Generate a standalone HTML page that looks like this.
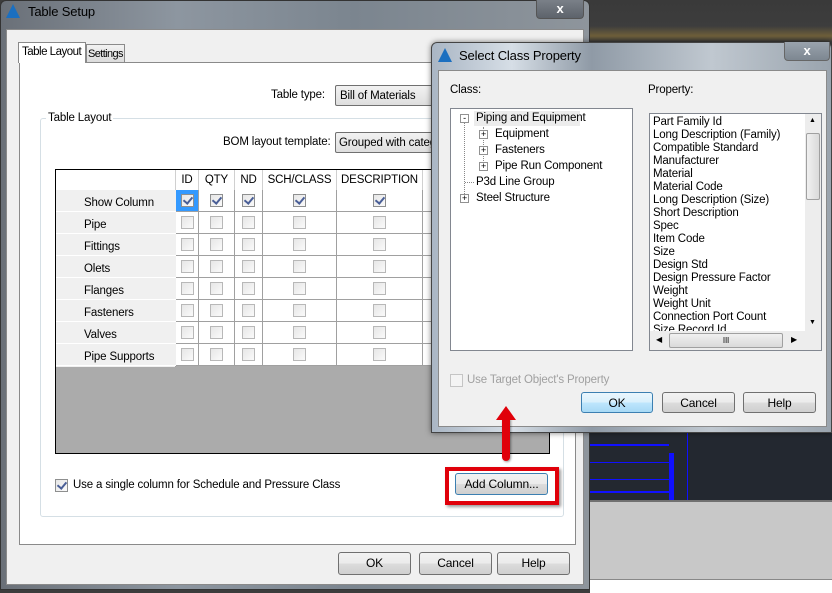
<!DOCTYPE html>
<html><head><meta charset="utf-8">
<style>
*{box-sizing:border-box;margin:0;padding:0}
body{width:832px;height:593px;overflow:hidden;position:relative;background:#3c3c3c;font-family:"Liberation Sans",sans-serif;font-size:11.5px;letter-spacing:-0.15px;color:#000;white-space:nowrap}
.a{position:absolute}
.btn{position:absolute;border:1px solid #707070;border-radius:3px;background:linear-gradient(#f2f2f2,#ebebeb 50%,#dcdcdc 51%,#cfcfcf);text-align:center;line-height:20px;font-size:12px}
.cb{position:absolute;width:13px;height:13px;border:1px solid #b8b8b8;background:linear-gradient(135deg,#e6e6e6,#fafafa)}
.ck{border-color:#8e8f8f}
.ck:after{content:"";position:absolute;left:3px;top:0px;width:4px;height:7px;border:solid #4a5f97;border-width:0 2px 2px 0;transform:rotate(40deg)}
.cell{position:absolute;border-right:1px solid #a0a0a0;border-bottom:1px solid #a0a0a0;background:#fff}
.rh{position:absolute;background:#f0f0f0;border-bottom:1px solid #fff;padding-left:28px;line-height:26px}
.pl{position:absolute;left:653px;line-height:13px}
</style></head><body>
<div class="a" style="left:590px;top:0;width:242px;height:42px;background:linear-gradient(#3a3a3a 0,#3d3d3d 26px,#6e5f3a 36px,#3a3a3a 42px)"></div>
<div class="a" style="left:590px;top:433px;width:242px;height:67px;background:#232830"></div>
<div class="a" style="left:590px;top:444px;width:79px;height:2px;background:#1010ff"></div>
<div class="a" style="left:590px;top:462px;width:79px;height:1px;background:#1010ff"></div>
<div class="a" style="left:590px;top:479px;width:79px;height:1px;background:#1010ff"></div>
<div class="a" style="left:590px;top:491px;width:79px;height:2px;background:#1010ff"></div>
<div class="a" style="left:669px;top:453px;width:5px;height:47px;background:#1010ff"></div>
<div class="a" style="left:687px;top:433px;width:1px;height:67px;background:#1010ff"></div>
<div class="a" style="left:590px;top:500px;width:242px;height:80px;background:#c8c8c8;border-top:2px solid #707070;border-bottom:1px solid #888"></div>
<div class="a" style="left:590px;top:580px;width:242px;height:13px;background:#fff"></div>

<div class="a" style="left:0;top:0;width:590px;height:590px;border-radius:6px 6px 0 0;background:linear-gradient(90deg,#6a7078,#8d96a0 30%,#7b858f 60%,#8e959c);border:1px solid #333"></div>
<div class="a" style="left:6px;top:4px;font-size:13px;color:#000"><span style="display:inline-block;width:0;height:0;border-left:7px solid transparent;border-right:7px solid transparent;border-bottom:14px solid #1b6fc0;vertical-align:-2px;margin-right:8px"></span>Table Setup</div>
<div class="a" style="left:536px;top:0;width:48px;height:19px;border:1px solid #555;border-top:0;border-radius:0 0 4px 4px;background:linear-gradient(#7a8088,#5d636b);color:#fff;text-align:center;font-weight:bold;font-size:13px;line-height:18px">x</div>
<div class="a" style="left:6px;top:29px;width:578px;height:556px;background:#f0f0f0;border:1px solid #8a8a8a"></div>
<div class="a" style="left:19px;top:62px;width:557px;height:483px;background:#fff;border:1px solid #8a8a8a"></div>
<div class="a" style="left:18px;top:42px;width:68px;height:21px;background:#fff;border:1px solid #8a8a8a;border-bottom:0;padding:3px 0 0 3px;letter-spacing:-0.5px">Table Layout</div>
<div class="a" style="left:86px;top:44px;width:39px;height:18px;background:linear-gradient(#f2f2f2,#dcdcdc);border:1px solid #8a8a8a;border-bottom:0;padding:3px 0 0 1px;overflow:hidden;letter-spacing:-0.6px;font-size:11px">Settings</div>
<div class="a" style="left:271px;top:89px">Table type:</div>
<div class="a" style="left:335px;top:85px;width:120px;height:21px;border:1px solid #707070;border-radius:2px;background:linear-gradient(#f2f2f2,#dedede);padding:4px 0 0 4px">Bill of Materials</div>
<div class="a" style="left:40px;top:118px;width:524px;height:399px;border:1px solid #d5dfe5;border-radius:3px"></div>
<div class="a" style="left:46px;top:112px;background:#fff;padding:0 2px">Table Layout</div>
<div class="a" style="left:223px;top:136px">BOM layout template:</div>
<div class="a" style="left:335px;top:132px;width:120px;height:21px;border:1px solid #707070;border-radius:2px;background:linear-gradient(#f2f2f2,#dedede);padding:4px 0 0 3px;overflow:hidden">Grouped with category</div>
<div class="a" style="left:55px;top:169px;width:495px;height:285px;background:#ababab;border:1px solid #000"></div>
<div class="a" style="left:56px;top:170px;width:493px;height:20px;background:#fff"></div>
<div class="a" style="left:56px;top:170px;width:120px;height:197px;background:#f0f0f0;border-right:1px solid #a0a0a0"></div>
<div class="a" style="left:56px;top:170px;width:120px;height:20px;background:#fff;border-right:1px solid #d0d0d0"></div>
<div class="a" style="left:63px;top:198px;width:0;height:0;border-top:5px solid transparent;border-bottom:5px solid transparent;border-left:5px solid #000"></div>
<div id="grid"></div>
<div class="cb ck" style="left:55px;top:479px"></div>
<div class="a" style="left:73px;top:479px">Use a single column for Schedule and Pressure Class</div>
<div class="a" style="left:445px;top:467px;width:114px;height:38px;border:4px solid #e0000a;box-shadow:2px 2px 3px rgba(0,0,0,.4)"></div>
<div class="btn" style="left:455px;top:473px;width:93px;height:22px;border-color:#3c7fb1">Add Column...</div>
<div class="btn" style="left:338px;top:552px;width:73px;height:23px">OK</div>
<div class="btn" style="left:419px;top:552px;width:73px;height:23px">Cancel</div>
<div class="btn" style="left:497px;top:552px;width:73px;height:23px">Help</div>

<div class="a" style="left:431px;top:42px;width:401px;height:391px;border-radius:6px 6px 0 0;background:linear-gradient(90deg,#aab6c4,#d6dee6 20%,#8f9aa6 40%,#c0c8d0 70%,#9aa4ae);border:1px solid #444;box-shadow:0 0 6px rgba(0,0,0,.5)"></div>
<div class="a" style="left:438px;top:48px;font-size:13px"><span style="display:inline-block;width:0;height:0;border-left:7px solid transparent;border-right:7px solid transparent;border-bottom:14px solid #1b6fc0;vertical-align:-2px;margin-right:7px"></span>Select Class Property</div>
<div class="a" style="left:784px;top:42px;width:46px;height:19px;border:1px solid #666;border-top:0;border-radius:0 0 4px 4px;background:linear-gradient(#9aa3ad,#7d8791);color:#fff;text-align:center;font-weight:bold;font-size:13px;line-height:18px">x</div>
<div class="a" style="left:438px;top:70px;width:389px;height:357px;background:#f0f0f0;border:1px solid #8a8a8a"></div>
<div class="a" style="left:450px;top:84px">Class:</div>
<div class="a" style="left:648px;top:84px">Property:</div>
<div class="a" style="left:450px;top:108px;width:183px;height:243px;background:#fff;border:1px solid #828790"></div>
<div class="a" style="left:474px;top:111px;width:106px;height:15px;background:#ececec"></div>
<div class="a" style="left:464px;top:121px;width:0;height:77px;border-left:1px dotted #888"></div>
<div class="a" style="left:483px;top:127px;width:0;height:40px;border-left:1px dotted #888"></div>
<div class="a" style="left:476px;top:112px">Piping and Equipment</div>
<div class="a" style="left:495px;top:128px">Equipment</div>
<div class="a" style="left:495px;top:144px">Fasteners</div>
<div class="a" style="left:495px;top:160px">Pipe Run Component</div>
<div class="a" style="left:476px;top:176px">P3d Line Group</div>
<div class="a" style="left:476px;top:192px">Steel Structure</div>
<div class="a" style="left:465px;top:182px;width:9px;border-top:1px dotted #888"></div>
<div class="a" style="left:460px;top:114px;width:9px;height:9px;border:1px solid #919191;background:#fff;font-size:9px;line-height:6px;text-align:center">-</div>
<div class="a" style="left:479px;top:130px;width:9px;height:9px;border:1px solid #919191;background:#fff;font-size:9px;line-height:7px;text-align:center">+</div>
<div class="a" style="left:479px;top:146px;width:9px;height:9px;border:1px solid #919191;background:#fff;font-size:9px;line-height:7px;text-align:center">+</div>
<div class="a" style="left:479px;top:162px;width:9px;height:9px;border:1px solid #919191;background:#fff;font-size:9px;line-height:7px;text-align:center">+</div>
<div class="a" style="left:460px;top:194px;width:9px;height:9px;border:1px solid #919191;background:#fff;font-size:9px;line-height:7px;text-align:center">+</div>
<div class="a" style="left:649px;top:113px;width:173px;height:238px;background:#fff;border:1px solid #828790;overflow:hidden"></div>
<div class="pl" style="top:116px">Part Family Id</div>
<div class="pl" style="top:129px">Long Description (Family)</div>
<div class="pl" style="top:142px">Compatible Standard</div>
<div class="pl" style="top:155px">Manufacturer</div>
<div class="pl" style="top:168px">Material</div>
<div class="pl" style="top:181px">Material Code</div>
<div class="pl" style="top:194px">Long Description (Size)</div>
<div class="pl" style="top:207px">Short Description</div>
<div class="pl" style="top:220px">Spec</div>
<div class="pl" style="top:233px">Item Code</div>
<div class="pl" style="top:246px">Size</div>
<div class="pl" style="top:259px">Design Std</div>
<div class="pl" style="top:272px">Design Pressure Factor</div>
<div class="pl" style="top:285px">Weight</div>
<div class="pl" style="top:298px">Weight Unit</div>
<div class="pl" style="top:311px">Connection Port Count</div>
<div class="a" style="left:650px;top:324px;width:154px;height:7px;overflow:hidden"><div style="position:absolute;left:3px;top:0;line-height:13px">Size Record Id</div></div>
<div class="a" style="left:805px;top:114px;width:16px;height:217px;background:#ededed"></div>
<div class="a" style="left:806px;top:133px;width:14px;height:67px;border:1px solid #a0a0a0;border-radius:2px;background:linear-gradient(90deg,#f0f0f0,#dadada)"></div>
<div class="a" style="left:809px;top:117px;font-size:7px">▲</div>
<div class="a" style="left:809px;top:319px;font-size:7px">▼</div>
<div class="a" style="left:650px;top:331px;width:171px;height:19px;background:#ededed"></div>
<div class="a" style="left:669px;top:333px;width:114px;height:15px;border:1px solid #a0a0a0;border-radius:2px;background:linear-gradient(#f0f0f0,#dadada);text-align:center;font-size:8px;line-height:13px">III</div>
<div class="a" style="left:656px;top:335px;font-size:8px">◀</div>
<div class="a" style="left:791px;top:335px;font-size:8px">▶</div>
<div class="cb" style="left:450px;top:374px;border-color:#c5c5c5;background:#f4f4f4"></div>
<div class="a" style="left:467px;top:374px;color:#a0a0a0">Use Target Object's Property</div>
<div class="btn" style="left:581px;top:392px;width:72px;height:21px;border-color:#3c7fb1;background:linear-gradient(#eaf6fd,#d9f0fc 50%,#bee6fd 51%,#a7d9f5)">OK</div>
<div class="btn" style="left:662px;top:392px;width:73px;height:21px">Cancel</div>
<div class="btn" style="left:743px;top:392px;width:73px;height:21px">Help</div>

<div class="a" style="left:502px;top:418px;width:8px;height:43px;background:#e0000a;border-radius:0 0 4px 4px;box-shadow:1px 1px 2px rgba(0,0,0,.4);z-index:5"></div>
<div class="a" style="left:496px;top:406px;width:0;height:0;border-left:10px solid transparent;border-right:10px solid transparent;border-bottom:14px solid #e0000a;z-index:5"></div>

<script>
var g=document.getElementById('grid'),h='';
var cols=[[176,23,'ID'],[199,36,'QTY'],[235,28,'ND'],[263,74,'SCH/CLASS'],[337,86,'DESCRIPTION'],[423,127,'']];
var rows=['Show Column','Pipe','Fittings','Olets','Flanges','Fasteners','Valves','Pipe Supports'];
cols.forEach(function(c){h+='<div class="a" style="left:'+c[0]+'px;top:170px;width:'+c[1]+'px;height:20px;border-right:1px solid #d0d0d0;text-align:center;line-height:21px">'+c[2]+'</div>';});
rows.forEach(function(r,i){var y=190+i*22;
h+='<div class="rh" style="left:56px;top:'+y+'px;width:120px;height:22px">'+r+'</div>';
cols.forEach(function(c,j){var last=j==5;h+='<div class="cell" style="left:'+c[0]+'px;top:'+y+'px;width:'+(last?124:c[1])+'px;height:22px;'+(last?'border-right:0':'')+(i==0&&j==0?';background:#3399ff':'')+'"></div>';
if(!last)h+='<div class="cb'+(i==0?' ck':'')+'" style="left:'+(c[0]+Math.round(c[1]/2)-7)+'px;top:'+(y+4)+'px"></div>';});});
g.innerHTML=h;
</script>
</body></html>
